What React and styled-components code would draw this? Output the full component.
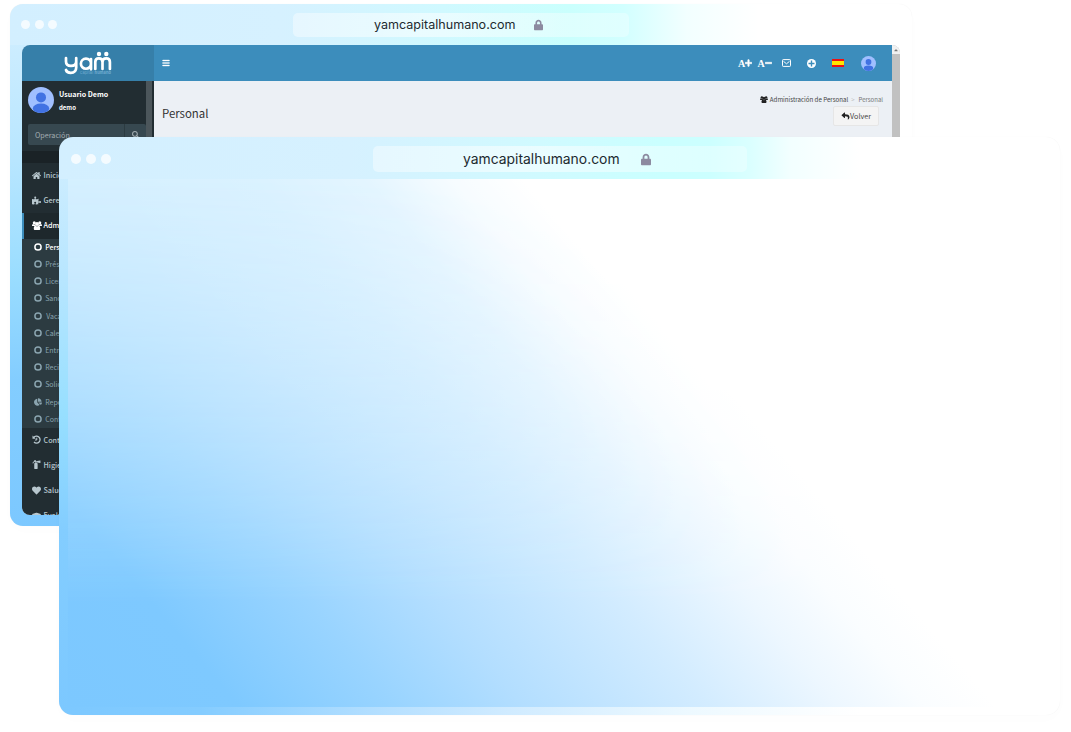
import React from 'react'
import styled, { createGlobalStyle, css } from 'styled-components'
import {
	FaBars,
	FaChartPie,
	FaFireExtinguisher,
	FaGraduationCap,
	FaHeart,
	FaHome,
	FaLock,
	FaPlus,
	FaMinus,
	FaReply,
	FaPuzzlePiece,
	FaSearch,
	FaCaretUp,
} from 'react-icons/fa'

const mainItems = [
	{ icon: <FaHome />, label: 'Inicio' },
	{ icon: <FaPuzzlePiece />, label: 'Gerencia' },
	{ icon: <UsersIcon />, label: 'Administración', active: true },
]

const subItems = [
	{ label: 'Personal', active: true },
	{ label: 'Préstamos' },
	{ label: 'Licencias' },
	{ label: 'Sanciones' },
	{ label: 'Vacaciones', indent: true },
	{ label: 'Calendario' },
	{ label: 'Entrevistas' },
	{ label: 'Recibos' },
	{ label: 'Solicitudes' },
	{ label: 'Reportes', icon: <FaChartPie /> },
	{ label: 'Configuración' },
]

const lastItems = [
	{ icon: <HistoryIcon />, label: 'Control' },
	{ icon: <FaFireExtinguisher />, label: 'Higiene' },
	{ icon: <FaHeart />, label: 'Salud' },
	{ icon: <FaGraduationCap />, label: 'Evaluación' },
]

function UsersIcon() {
	return (
		<svg width='10' height='9' viewBox='0 0 20 18' fill='currentColor'>
			<circle cx='4.500' cy='3.500' r='3' />
			<circle cx='15.500' cy='3.500' r='3' />
			<circle cx='10' cy='6' r='4' />
			<path d='M0 9.500C0 7.500 1 6 2 6c1.500 1 3 1 4.500.3C6.500 8 7 9 8 10H2C.8 10 0 10.500 0 9.500M20 9.500C20 7.500 19 6 18 6c-1.500 1-3 1-4.500.3 0 1.700-.5 2.700-1.500 3.700h6c1.200 0 2 .5 2-.5' />
			<path d='M3.500 15.500c0-3.500 1-6 3.500-6 2 1.500 4 1.500 6 0 2.500 0 3.500 2.500 3.500 6 0 1.600-1 2.500-2.500 2.500H6c-1.500 0-2.500-.9-2.500-2.500' />
		</svg>
	)
}

function HistoryIcon() {
	return (
		<svg width='9' height='9' viewBox='0 0 18 18' fill='none' stroke='currentColor' strokeWidth='2.600'>
			<path d='M3.500 5A7 7 0 1 1 4 14' />
			<path d='M1 1v6.500h6.500z' fill='currentColor' stroke='none' />
			<path d='M9.500 5.500v4.500H6' strokeWidth='2' />
		</svg>
	)
}

function RingBullet() {
	return (
		<svg width='8' height='8' viewBox='0 0 8 8' fill='none' stroke='currentColor' strokeWidth='1.500'>
			<circle cx='4' cy='4' r='3.100' />
		</svg>
	)
}

function Avatar({ size }) {
	return (
		<svg width={size} height={size} viewBox='0 0 26 26'>
			<defs>
				<clipPath id={'avatar' + size}>
					<circle cx='13' cy='13' r='13' />
				</clipPath>
			</defs>
			<g clipPath={`url(#avatar${size})`}>
				<rect width='26' height='26' fill='#a0bfff' />
				<circle cx='13' cy='10.400' r='5' fill='#4172e3' />
				<ellipse cx='13' cy='21.600' rx='8.200' ry='5' fill='#4172e3' />
			</g>
		</svg>
	)
}

function YamLogo() {
	return (
		<svg width='48' height='26' viewBox='0 0 48 26'>
			<g fill='none' stroke='#fff' strokeWidth='2.7' strokeLinecap='round' strokeLinejoin='round'>
				<path d='M2 7v3.500c0 3 1.800 4.400 5 4.400 3.300 0 5.200-1.400 5.200-4.400V7v9.500c0 3.500-2 5.300-5.500 5.300-2.600 0-4.200-1.100-4.700-2.800' />
				<path d='M27 8v10.300M27 12.700a5 5 0 1 1-10.100 0a5 5 0 0 1 10.100 0' />
				<path d='M31.300 18V11c0-2.300 1-3.700 3.500-3.700s3.700 1.400 3.700 3.700v7M38.500 11c0-2.300 1.200-3.700 3.700-3.700s3.700 1.400 3.700 3.700v7' />
			</g>
			<circle cx='35' cy='3' r='2.200' fill='#fff' />
			<circle cx='42.300' cy='3' r='2.200' fill='#fff' />
			<text x='16' y='23' textLength='31' fontSize='4' fill='#73aed1' fontFamily='Inter, sans-serif'>
				capital <tspan fontWeight='700'>humano</tspan>
			</text>
		</svg>
	)
}

function MailIcon() {
	return (
		<svg width='9' height='8' viewBox='0 0 9 8' fill='none' stroke='#fff' strokeWidth='1'>
			<rect x='.5' y='.6' width='8' height='6.800' rx='.7' />
			<path d='M1.500 2.300 4.500 4.800l3-2.500' />
		</svg>
	)
}

function RingIcon() {
	return (
		<svg width='9' height='9' viewBox='0 0 9 9'>
			<circle cx='4.500' cy='4.500' r='4.500' fill='#fff' />
			<path d='M4.500 1.500v6M1.500 4.500h6' stroke='#3b8dbc' strokeWidth='1.400' />
		</svg>
	)
}

function Bar({ small }) {
	return (
		<TitleBar $small={small}>
			<Dots $small={small}>
				<i />
				<i />
				<i />
			</Dots>
			<Address $small={small}>
				<span>yamcapitalhumano.com</span>
				<FaLock />
			</Address>
		</TitleBar>
	)
}

export default function App() {
	return (
		<Desktop>
			<GlobalStyle />
			<BackWindow>
				<Bar small />
				<Site>
					<Sidebar>
						<Brand>
							<YamLogo />
						</Brand>
						<SideBody>
							<SideContent>
								<User>
									<Avatar size={26} />
									<div>
										<b>Usuario Demo</b>
										<small>demo</small>
									</div>
								</User>
								<Search>
									<span>Operación</span>
									<div>
										<FaSearch />
									</div>
								</Search>
								<MenuGap />
								{mainItems.map((item) => (
									<MenuItem key={item.label} $active={item.active}>
										{item.icon}
										<span>{item.label}</span>
									</MenuItem>
								))}
								<SubMenu>
									{subItems.map((item) => (
										<SubItem key={item.label} $active={item.active} $indent={item.indent}>
											{item.icon || <RingBullet />}
											<span>{item.label}</span>
										</SubItem>
									))}
								</SubMenu>
								{lastItems.map((item) => (
									<MenuItem key={item.label}>
										{item.icon}
										<span>{item.label}</span>
									</MenuItem>
								))}
							</SideContent>
							<SideScroll />
						</SideBody>
					</Sidebar>
					<Main>
						<NavBar>
							<FaBars />
							<NavTools>
								<FontSize>
									A<FaPlus />
								</FontSize>
								<FontSize>
									A<FaMinus />
								</FontSize>
								<MailIcon />
								<RingIcon />
								<Flag />
								<Avatar size={15} />
							</NavTools>
						</NavBar>
						<PageHead>
							<h1>Personal</h1>
							<HeadRight>
								<Crumbs>
									<UsersIcon />
									<b>Administración de Personal</b>
									<i>&gt;</i>
									<span>Personal</span>
								</Crumbs>
								<BackButton>
									<FaReply />
									Volver
								</BackButton>
							</HeadRight>
						</PageHead>
					</Main>
					<PageScroll>
						<div>
							<FaCaretUp />
						</div>
					</PageScroll>
				</Site>
			</BackWindow>
			<FrontWindow>
				<Bar />
				<Blank />
			</FrontWindow>
		</Desktop>
	)
}

const GlobalStyle = createGlobalStyle`
	* {
		box-sizing: border-box;
	}
	body {
		margin: 0;
		background: #fff;
		overflow: hidden;
	}
`
const Desktop = styled.div`
	position: relative;
	width: 1071px;
	height: 732px;
	overflow: hidden;
	background: #fff;
	font-family: 'Noto Sans CJK SC', 'Noto Sans', sans-serif;
`
const windowBase = css`
	position: absolute;
	display: flex;
	flex-direction: column;
	overflow: hidden;
	box-shadow: 0 0 1px rgba(0, 0, 0, 0.06), 0 4px 16px rgba(0, 0, 0, 0.012);
`
const BackWindow = styled.div`
	${windowBase}
	left: 10px;
	top: 4px;
	width: 902px;
	height: 522px;
	border-radius: 13px;
	padding: 0 12px 11px;
	background:
		linear-gradient(90deg, #d3efff 0%, #d6f1ff 30%, #d0f9ff 48%, #cafffd 62%, #d2ffff 68%, #f2ffff 75%, #fff 83%) top / 100% 41px no-repeat,
		linear-gradient(180deg, #d3efff 0%, #b8e6ff 30%, #9addff 52%, #83cdff 72%, #7cc8ff 100%) left / 60% 100% no-repeat,
		#fff;
`
const FrontWindow = styled.div`
	${windowBase}
	left: 59px;
	top: 137px;
	width: 1001px;
	height: 578px;
	border-radius: 14px;
	padding: 0 9px 8px;
	background:
		linear-gradient(90deg, #d3efff 0%, #d6f1ff 29%, #d0faff 48%, #caffff 60%, #ccffff 65%, #daffff 69%, #f2ffff 73%, #fff 80%) top / 100% 42px no-repeat,
		linear-gradient(90deg, #7cc8ff 0%, #84ccff 14%, #b4dfff 32%, #d0ebff 45%, #edf9ff 63%, #fff 80%) bottom / 100% 8px no-repeat,
		linear-gradient(180deg, #d3efff 0%, #b8e6ff 24%, #97dfff 48%, #83cdff 68%, #7cc8ff 100%) left / 9px 100% no-repeat,
		#fff;
`
const TitleBar = styled.div`
	display: flex;
	align-items: center;
	flex-shrink: 0;
	height: ${(p) => (p.$small ? 41 : 42)}px;
`
const Dots = styled.div`
	display: flex;
	gap: ${(p) => (p.$small ? 4.7 : 5.2)}px;
	padding-left: ${(p) => (p.$small ? 0 : 3)}px;
	width: ${(p) => (p.$small ? 272 : 305)}px;
	margin-top: ${(p) => (p.$small ? 0 : 2)}px;
	margin-left: ${(p) => (p.$small ? -1 : 0)}px;
	i {
		width: ${(p) => (p.$small ? 9 : 10)}px;
		height: ${(p) => (p.$small ? 9 : 10)}px;
		border-radius: 50%;
		background: rgba(255, 255, 255, 0.75);
	}
`
const Address = styled.div`
	display: flex;
	align-items: center;
	width: ${(p) => (p.$small ? 336 : 374)}px;
	height: ${(p) => (p.$small ? 24 : 26)}px;
	margin-top: ${(p) => (p.$small ? 0 : 2)}px;
	padding-left: ${(p) => (p.$small ? 81 : 90)}px;
	gap: ${(p) => (p.$small ? 18.5 : 21)}px;
	border-radius: 5px;
	background: linear-gradient(90deg, rgba(255, 255, 255, 0.4), rgba(255, 255, 255, 0.55) 40%, rgba(255, 255, 255, 0.3));
	color: #1d2a30;
	font-family: Inter, sans-serif;
	font-size: ${(p) => (p.$small ? 12.55 : 13.9)}px;
	svg {
		width: ${(p) => (p.$small ? 9 : 10)}px;
		height: ${(p) => (p.$small ? 12 : 13)}px;
		color: #8c8aa0;
	}
`
const Blank = styled.div`
	position: relative;
	flex: 1;
	background:
		linear-gradient(49.8deg, transparent 31%, rgba(255, 255, 255, 0.12) 44%, rgba(255, 255, 255, 0.35) 52%, rgba(255, 255, 255, 0.8) 58%, #fff 63%),
		#d5f0ff;
	&::after {
		content: '';
		position: absolute;
		inset: 0;
		background: linear-gradient(49.8deg, #7cc8ff 0%, #7ec9ff 12%, #99d4ff 23%, #b3deff 32%, #d3ecff 45%, #edf7ff 54%, #fafdff 60%, #fff 65%);
		mask-image: linear-gradient(180deg, transparent 0%, #000 80%);
	}
`
const Site = styled.div`
	display: flex;
	width: 878px;
	height: 470px;
	border-radius: 8px;
	overflow: hidden;
	background: #ecf0f5;
`
const Sidebar = styled.div`
	width: 132px;
	display: flex;
	flex-direction: column;
`
const Brand = styled.div`
	height: 36px;
	flex-shrink: 0;
	padding: 6px 0 0 42px;
	background: #367fa9;
	svg {
		display: block;
	}
`
const SideBody = styled.div`
	display: flex;
	flex: 1;
	overflow: hidden;
	background: #222d32;
`
const SideContent = styled.div`
	width: 124px;
`
const SideScroll = styled.div`
	width: 6px;
	background: #4c565b;
`
const User = styled.div`
	display: flex;
	height: 43px;
	padding: 6px 0 0 6px;
	gap: 5px;
	color: #fff;
	b,
	small {
		position: relative;
		top: 1px;
		display: block;
		font-size: 7.1px;
		line-height: 13px;
		font-weight: 700;
	}
	small {
		font-size: 6px;
	}
`
const Search = styled.div`
	display: flex;
	align-items: center;
	justify-content: space-between;
	height: 21px;
	margin-left: 6px;
	padding-left: 7px;
	border-radius: 2px;
	background: #374850;
	color: #a3adb2;
	font-size: 7.2px;
	div {
		display: flex;
		align-items: center;
		justify-content: center;
		width: 22px;
		height: 21px;
		border-left: 1px solid #2c3b41;
	}
`
const MenuGap = styled.div`
	height: 12px;
	margin: 6px 0 0;
	background: #1a2226;
`
const MenuItem = styled.div`
	display: flex;
	align-items: center;
	height: 25.2px;
	padding: 0 0 1px 8px;
	gap: 2.5px;
	border-left: 2px solid ${(p) => (p.$active ? '#3c8dbc' : 'transparent')};
	background: ${(p) => (p.$active ? '#1e282c' : 'transparent')};
	color: ${(p) => (p.$active ? '#fff' : '#b8c7ce')};
	font-size: 7.2px;
	font-weight: 500;
	line-height: 10px;
	svg {
		flex-shrink: 0;
		width: ${(p) => (p.$active ? 10 : 9)}px;
		height: 9px;
		margin-right: ${(p) => (p.$active ? -1 : 0)}px;
	}
`
const SubMenu = styled.div`
	background: #2c3b41;
`
const SubItem = styled.div`
	display: flex;
	align-items: center;
	height: 17.2px;
	padding: 0 0 0.5px 11.5px;
	gap: ${(p) => (p.$indent ? 4.7 : 3.7)}px;
	color: ${(p) => (p.$active ? '#fff' : '#8aa4af')};
	font-size: 7px;
	font-weight: ${(p) => (p.$active ? 500 : 400)};
	line-height: 10px;
	svg {
		flex-shrink: 0;
		width: 8px;
		height: 8px;
	}
`
const Main = styled.div`
	width: 738px;
`
const NavBar = styled.div`
	display: flex;
	align-items: center;
	justify-content: space-between;
	height: 36px;
	padding: 0 16px 0 8px;
	background: #3c8dbc;
	color: #fff;
	> svg {
		width: 8px;
		height: 8px;
		stroke: #fff;
		stroke-width: 20px;
	}
`
const NavTools = styled.div`
	display: flex;
	align-items: center;
	> svg:nth-of-type(1) {
		margin-left: 5px;
	}
	> svg:nth-of-type(2) {
		margin-left: 16px;
	}
	> svg:nth-of-type(3) {
		margin-left: 17px;
	}
`
const FontSize = styled.div`
	display: flex;
	align-items: center;
	width: 19.5px;
	font: 700 10px 'Liberation Serif', serif;
	svg {
		width: 7px;
		height: 8px;
		stroke: #fff;
		stroke-width: 30px;
	}
`
const Flag = styled.div`
	width: 12px;
	height: 8px;
	margin-left: 16px;
	background: linear-gradient(#ee1111 25%, #ffe600 25% 72%, #ee1111 72%);
`
const PageHead = styled.div`
	display: flex;
	justify-content: space-between;
	padding: 0 9px 0 8px;
	h1 {
		margin: 23px 0 0;
		color: #333;
		font-size: 11.4px;
		line-height: 18px;
		font-weight: 400;
	}
`
const HeadRight = styled.div`
	display: flex;
	flex-direction: column;
	align-items: flex-end;
	padding-top: 13px;
`
const Crumbs = styled.div`
	display: flex;
	align-items: center;
	height: 11px;
	color: #777;
	font-size: 6px;
	b {
		margin-left: 2px;
		color: #444;
		font-size: 6.15px;
		font-weight: 400;
	}
	i {
		margin: 0 4px 0 3px;
		font-style: normal;
		color: #bbb;
	}
	svg {
		width: 8px;
		height: 7px;
		color: #222;
	}
`
const BackButton = styled.div`
	display: flex;
	align-items: center;
	justify-content: center;
	width: 46px;
	height: 20px;
	margin: 1px 4px 0 0;
	border: 1px solid #e6e6e6;
	border-radius: 2px;
	background: #f4f4f4;
	color: #444;
	font-size: 7.2px;
	svg {
		flex-shrink: 0;
		width: 9px;
		height: 8px;
		margin-bottom: 1px;
		color: #222;
	}
`
const PageScroll = styled.div`
	width: 8px;
	background: #c1c1c1;
	div {
		display: flex;
		align-items: center;
		justify-content: center;
		height: 9px;
		background: #f1f1f1;
		color: #777;
		font-size: 6px;
	}
`
